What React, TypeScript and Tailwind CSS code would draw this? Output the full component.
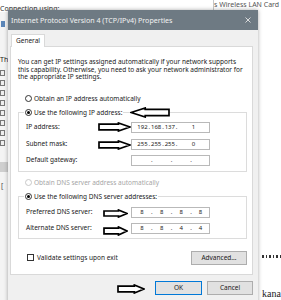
import React from "react";

const Arrow = ({ dir = "right", w = 33, h = 10 }: { dir?: "left" | "right"; w?: number; h?: number }) => {
  const sh = h * 0.28;
  const headX = w * 0.62;
  const pts = `1,${h / 2 - sh} ${headX},${h / 2 - sh} ${headX},1 ${w - 1},${h / 2} ${headX},${h - 1} ${headX},${h / 2 + sh} 1,${h / 2 + sh}`;
  return (
    <svg width={w} height={h} viewBox={`0 0 ${w} ${h}`} style={{ transform: dir === "left" ? "scaleX(-1)" : undefined }}>
      <polygon points={pts} fill="white" stroke="black" strokeWidth={1.7} strokeLinejoin="miter" />
    </svg>
  );
};

const Radio = ({ checked, disabled, label }: { checked?: boolean; disabled?: boolean; label: string }) => (
  <div className="flex items-center h-[10px] gap-[2px]">
    <div
      className={`w-[7px] h-[7px] rounded-full border bg-white flex items-center justify-center ${
        disabled ? "border-[#c8c8c8]" : "border-[#333333]"
      }`}
    >
      {checked && <div className="w-[3px] h-[3px] rounded-full bg-black" />}
    </div>
    <span className={`leading-[10px] ${disabled ? "text-[#a6a6a6]" : "text-[#1a1a1a]"}`}>{label}</span>
  </div>
);

const IpBox = ({ parts, kind }: { parts: string[]; kind: "wide" | "even" }) => {
  const fw = kind === "wide" ? [12, 12, 12, 34] : [19, 19, 19, 18];
  const pl = kind === "wide" ? 5 : 1;
  const dw = kind === "wide" ? 3 : 2;
  return (
    <div
      className="w-[79px] h-[11px] border border-[#b9b9b9] bg-white flex items-center text-[#1a1a1a] text-[6px]"
      style={{ paddingLeft: pl }}
    >
      {parts.map((p, i) => (
        <React.Fragment key={i}>
          <span className="flex justify-center leading-[9px]" style={{ width: fw[i] }}>
            {p}
          </span>
          {i < 3 && (
            <span className="flex justify-center leading-[9px]" style={{ width: dw }}>
              .
            </span>
          )}
        </React.Fragment>
      ))}
    </div>
  );
};

const Row = ({ label, children, className = "" }: { label: string; children: React.ReactNode; className?: string }) => (
  <div className={`flex items-center ${className}`}>
    <span className="w-[112px] pl-[7px] leading-[10px] text-[#1a1a1a]">{label}</span>
    {children}
  </div>
);

export default function App() {
  return (
    <div className="relative w-[281px] h-[300px] overflow-hidden bg-white font-['Noto_Sans',sans-serif] text-[6.5px]">
      {/* background window */}
      <div className="absolute left-0 top-[5px] text-[7px] text-[#333] leading-[8px] whitespace-nowrap">Connection using:</div>
      <div className="absolute left-[213px] top-0 w-px h-[11px] bg-[#c8c8c8]" />
      <div className="absolute left-[214px] top-0 text-[7px] leading-[9px] text-[#555] whitespace-nowrap">s Wireless LAN Card</div>
      <div className="absolute left-0 top-[12px] w-[8px] h-[290px] bg-[#f4f4f4]" />
      <div className="absolute left-[1px] top-[21px] w-[4px] h-[6px] bg-[#5b86b8]" />
      <div className="absolute left-0 top-[56px] text-[7px] leading-[8px] text-[#222]">Th</div>
      <div className="absolute left-0 top-[70px] flex flex-col gap-[4px]">
        {Array.from({ length: 8 }).map((_, i) => (
          <div key={i} className="w-[5px] h-[6px] border border-[#777] bg-[#eee]" />
        ))}
      </div>
      <div className="absolute left-0 top-[162px] w-[8px] h-[10px] bg-[#cfcfcf]" />
      <div className="absolute left-[1px] top-[182px] text-[7px] leading-[8px] text-[#444]">[</div>
      <div className="absolute left-[262px] top-[255px] flex gap-[2px]">
        {Array.from({ length: 6 }).map((_, i) => (
          <div key={i} className="w-[1.5px] h-[3px] bg-[#333]" />
        ))}
      </div>
      <div className="absolute left-[262px] top-[288px] font-['Liberation_Serif',serif] text-[10px] leading-[12px] text-[#222]">kana</div>

      {/* dialog */}
      <div className="absolute left-[8px] top-[10px] w-[250px] h-[300px] bg-[#f0f0f0] shadow-[0_0_4px_rgba(0,0,0,0.35)] flex flex-col">
        <div className="h-[20px] bg-[#6e7a83] flex items-center justify-between pl-[3px] pr-[7px] text-[#f2f2f2]">
          <span className="text-[7.1px] leading-[9px]">Internet Protocol Version 4 (TCP/IPv4) Properties</span>
          <svg width="6" height="6" viewBox="0 0 6 6">
            <path d="M0.5 0.5 L5.5 5.5 M5.5 0.5 L0.5 5.5" stroke="#e6e6e6" strokeWidth="0.9" />
          </svg>
        </div>
        <div className="pl-[2px] pr-[5px] pt-[4px] flex flex-col">
          <div className="flex">
            <div className="relative z-10 ml-px h-[13px] px-[4px] border border-b-0 border-[#d9d9d9] bg-white flex items-center text-[#1a1a1a]">
              General
            </div>
          </div>
          <div className="-mt-px h-[229px] border border-[#d9d9d9] bg-white pl-[7px] pt-[11px] flex flex-col">
            <p className="leading-[7.6px] text-[#1a1a1a] pr-[4px]">
              You can get IP settings assigned automatically if your network supports this capability. Otherwise, you need to ask your network administrator for the appropriate IP settings.
            </p>
            <div className="mt-[13px] pl-[7px]">
              <Radio label="Obtain an IP address automatically" />
            </div>
            <fieldset className="mt-[4px] w-[229px] border border-[#dcdcdc] pb-[5px]">
              <legend className="ml-[5px] px-px">
                <Radio checked label="Use the following IP address:" />
              </legend>
              <Row label="IP address:" className="mt-[4px]">
                <IpBox kind="wide" parts={["192", "168", "137", "1"]} />
              </Row>
              <Row label="Subnet mask:" className="mt-[6px]">
                <IpBox kind="wide" parts={["255", "255", "255", "0"]} />
              </Row>
              <Row label="Default gateway:" className="mt-[5px]">
                <IpBox kind="even" parts={["", "", "", ""]} />
              </Row>
            </fieldset>
            <div className="mt-[6px] pl-[7px]">
              <Radio disabled label="Obtain DNS server address automatically" />
            </div>
            <fieldset className="mt-[4px] w-[229px] border border-[#dcdcdc] pb-[4px]">
              <legend className="ml-[5px] px-px">
                <Radio checked label="Use the following DNS server addresses:" />
              </legend>
              <Row label="Preferred DNS server:" className="mt-[5px]">
                <IpBox kind="even" parts={["8", "8", "8", "8"]} />
              </Row>
              <Row label="Alternate DNS server:" className="mt-[5px]">
                <IpBox kind="even" parts={["8", "8", "4", "4"]} />
              </Row>
            </fieldset>
            <div className="mt-[12px] w-[229px] flex items-center justify-between">
              <div className="flex items-center gap-[3px] pl-[9px]">
                <div className="w-[7px] h-[7px] border border-[#333] bg-white" />
                <span className="leading-[10px] text-[#1a1a1a]">Validate settings upon exit</span>
              </div>
              <div className="w-[56px] h-[14px] bg-[#e1e1e1] border border-[#adadad] flex items-center justify-center text-[#1a1a1a]">
                Advanced...
              </div>
            </div>
          </div>
          <div className="mt-[6px] flex justify-end gap-[5px]">
            <div className="w-[47px] h-[14px] bg-[#e1e1e1] border-[1.5px] border-[#0078d7] flex items-center justify-center text-[#1a1a1a]">
              OK
            </div>
            <div className="w-[46px] h-[14px] bg-[#e1e1e1] border border-[#adadad] flex items-center justify-center text-[#1a1a1a]">
              Cancel
            </div>
          </div>
        </div>
      </div>

      {/* annotation arrows */}
      <div className="absolute left-[130px] top-[107px]">
        <Arrow dir="left" w={40} h={11} />
      </div>
      <div className="absolute left-[98px] top-[122px]">
        <Arrow w={33} h={10} />
      </div>
      <div className="absolute left-[98px] top-[140px]">
        <Arrow w={33} h={10} />
      </div>
      <div className="absolute left-[103px] top-[209px]">
        <Arrow w={25} h={9} />
      </div>
      <div className="absolute left-[103px] top-[226px]">
        <Arrow w={25} h={10} />
      </div>
      <div className="absolute left-[117px] top-[284px]">
        <Arrow w={28} h={10} />
      </div>
    </div>
  );
}
